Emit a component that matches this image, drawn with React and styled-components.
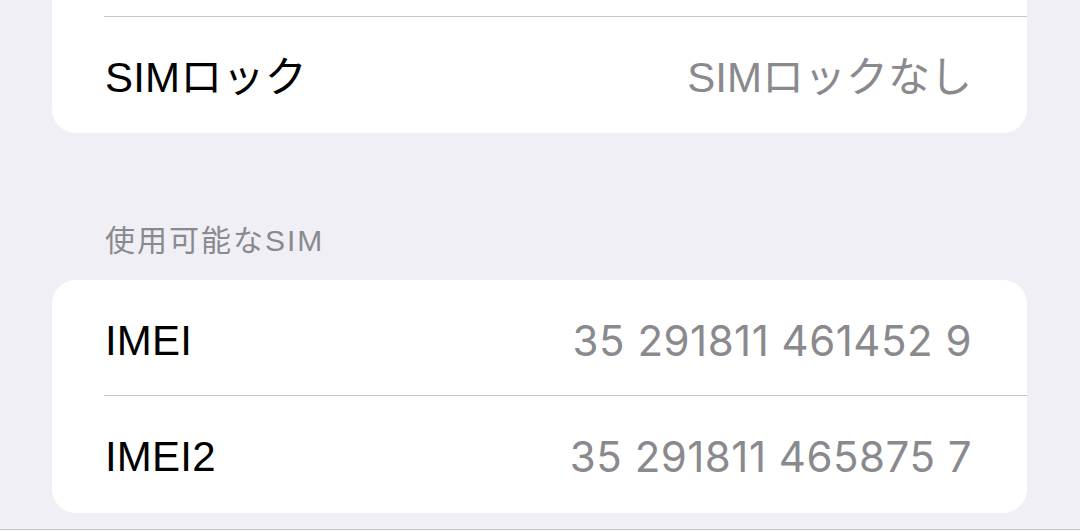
import styled, { createGlobalStyle } from "styled-components";

const Global = createGlobalStyle`
  html, body {
    margin: 0;
    padding: 0;
    background: #f0eff5;
    overflow: hidden;
  }
  body {
    font-family: "Liberation Sans", "Noto Sans CJK JP", sans-serif;
    -webkit-font-smoothing: antialiased;
  }
`;

const Page = styled.div`
  display: flex;
  flex-direction: column;
  width: 1080px;
  height: 531px;
  overflow: hidden;
`;

const Content = styled.div`
  display: flex;
  flex-direction: column;
  padding: 0 53px 0 52px;
`;

const Card = styled.div`
  display: flex;
  flex-direction: column;
  background: #ffffff;
  border-radius: 24px;
  margin-top: ${(p) => p.$offset || 0}px;
  overflow: hidden;
`;

const Row = styled.div`
  position: relative;
  display: flex;
  align-items: center;
  justify-content: space-between;
  box-sizing: border-box;
  height: ${(p) => p.$h || 116}px;
  padding: 6px 55px 0 53px;
  flex-shrink: 0;

  &::before {
    content: "";
    display: ${(p) => (p.$divider ? "block" : "none")};
    position: absolute;
    top: 0;
    left: 52px;
    right: 0;
    height: 1px;
    background: #c8c7cc;
  }
`;

const Label = styled.span`
  font-size: 42px;
  color: #000;
  line-height: 1;
  letter-spacing: 0.2px;
`;

const Value = styled.span`
  font-family: ${(p) =>
    p.$digits
      ? `"Inter", "Noto Sans CJK JP", sans-serif`
      : `"Liberation Sans", "Noto Sans CJK JP", sans-serif`};
  font-size: 42px;
  letter-spacing: ${(p) => (p.$digits ? "0.5px" : "0")};
  color: #8a8a8e;
  line-height: 1;
`;

const SectionHeader = styled.div`
  font-size: 30px;
  letter-spacing: 2px;
  color: #8a8a8e;
  padding: 93px 0 24px 53px;
  line-height: 1;
`;

const TabBar = styled.div`
  margin-top: 16px;
  height: 60px;
  border-top: 1px solid #c6c6cb;
  background: #f7f7f9;
`;

export default function App() {
  return (
    <Page>
      <Global />
      <Content>
        <Card $offset={-100}>
          <Row $h={116} />
          <Row $h={117} $divider>
            <Label>SIMロック</Label>
            <Value>SIMロックなし</Value>
          </Row>
        </Card>
        <SectionHeader>使用可能なSIM</SectionHeader>
        <Card>
          <Row $h={115}>
            <Label>IMEI</Label>
            <Value $digits>35 291811 461452 9</Value>
          </Row>
          <Row $h={118} $divider>
            <Label>IMEI2</Label>
            <Value $digits>35 291811 465875 7</Value>
          </Row>
        </Card>
      </Content>
      <TabBar />
    </Page>
  );
}
